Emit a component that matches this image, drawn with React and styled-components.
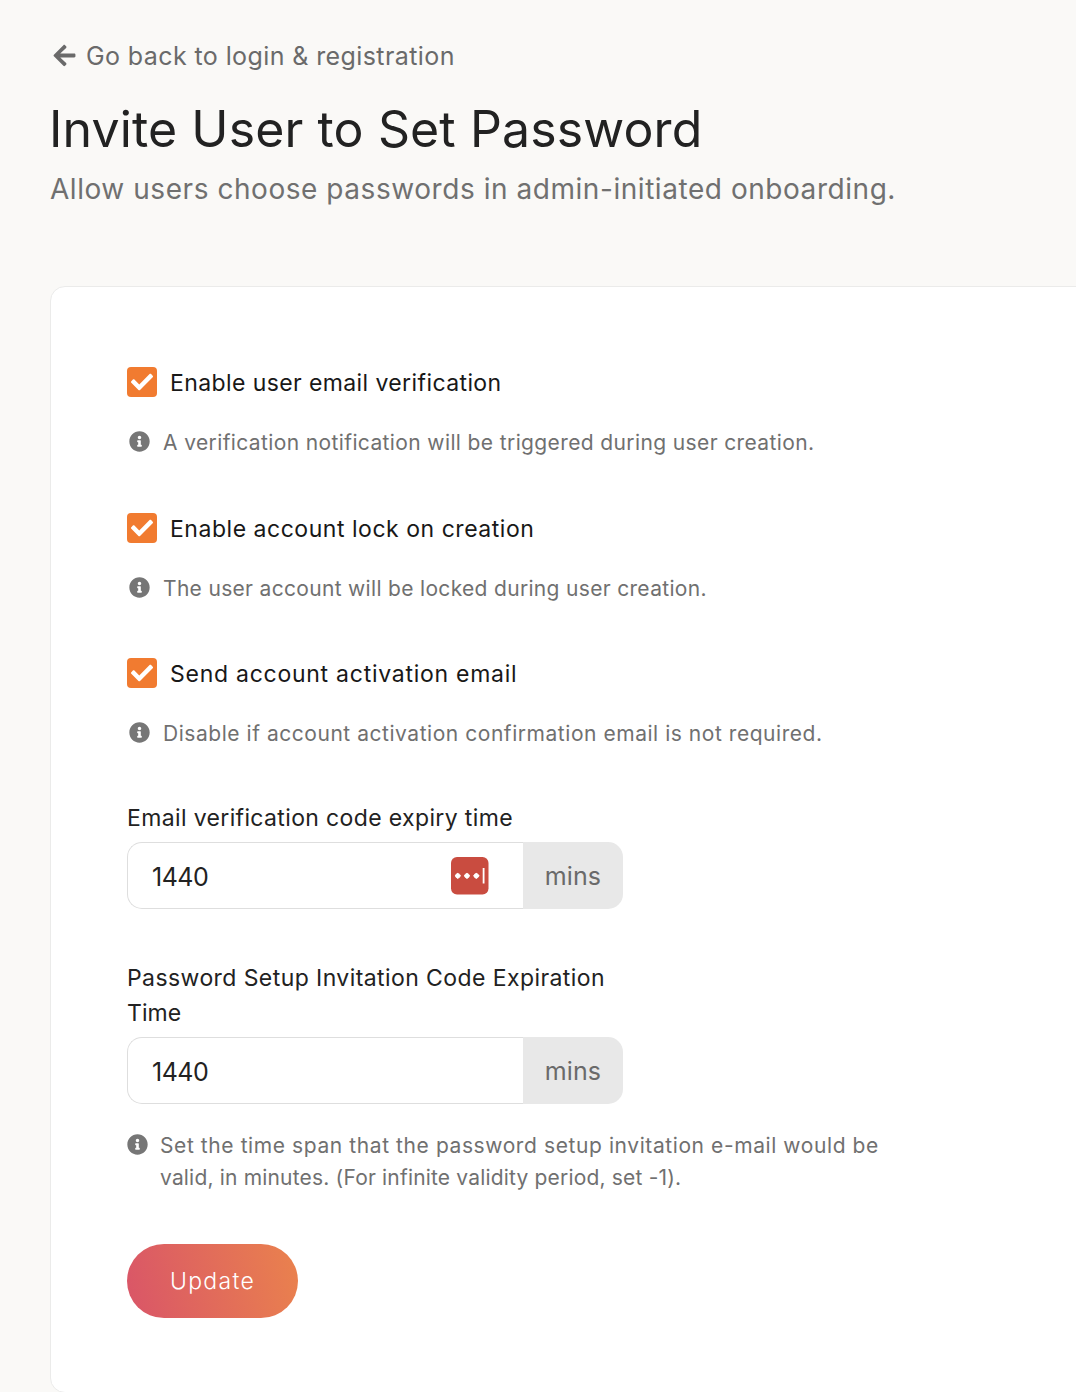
import React from "react";
import styled, { createGlobalStyle } from "styled-components";
import { FaArrowLeft, FaCheck, FaInfoCircle } from "react-icons/fa";

const GlobalStyle = createGlobalStyle`
  *, *::before, *::after { box-sizing: border-box; }
  body { margin: 0; background: #faf9f7; overflow: hidden; }
  button, input { font: inherit; letter-spacing: inherit; }
`;

const Page = styled.main`
  height: 1392px;
  overflow: hidden;
  padding: 38px 0 0 50px;
  background: #faf9f7;
  color: #222;
  font-family: Inter, "Liberation Sans", sans-serif;
  font-weight: 400;
`;

const Text = styled.span`
  display: block;
  white-space: nowrap;
  letter-spacing: ${(p) => p.$track || 0}px;
`;

const BackLink = styled.a`
  display: flex;
  align-items: center;
  gap: 9px;
  height: 36px;
  padding-left: 2px;
  color: #6a6a6a;
  font-size: 25px;
  line-height: 36px;
  svg { margin-top: -1px; }
`;

const Title = styled.h1`
  margin: 25px 0 0 -1px;
  font-size: 50px;
  line-height: 60px;
  font-weight: 400;
`;

const Subtitle = styled.p`
  margin: 13px 0 0;
  color: #707070;
  font-size: 28px;
  line-height: 34px;
`;

const Card = styled.section`
  width: 1100px;
  height: 1107px;
  margin-top: 80px;
  padding: 80px 76px 0;
  border: 1px solid #ebebea;
  border-radius: 15px;
  background: #fff;
`;

const Option = styled.div`
  height: 145.5px;
`;

const OptionLabel = styled.label`
  display: flex;
  align-items: center;
  gap: 13px;
  height: 30px;
  font-size: 23px;
  line-height: 32px;
  color: #181818;
  ${Text} { padding-top: 2px; }
`;

const Checkbox = styled.span`
  display: grid;
  place-items: center;
  width: 30px;
  height: 30px;
  border-radius: 4px;
  background: #f17b30;
  color: #fff;
  font-size: 22px;
`;

const Hint = styled.div`
  display: flex;
  align-items: flex-start;
  gap: ${(p) => (p.$flush ? 12 : 13)}px;
  margin-top: ${(p) => (p.$flush ? 26 : 30)}px;
  padding-left: ${(p) => (p.$flush ? 0 : 2)}px;
  color: #707070;
  font-size: 21px;
  line-height: 32px;
  svg { flex: none; width: 21px; height: 21px; margin-top: 4px; color: #767676; }
`;

const FieldLabel = styled.label`
  display: block;
  margin-top: ${(p) => p.$top}px;
  padding-bottom: 6px;
  color: #222;
  font-size: 23px;
  line-height: 35px;
`;

const Field = styled.div`
  display: flex;
  width: 496px;
  height: 67px;
`;

const InputShell = styled.div`
  display: flex;
  align-items: center;
  justify-content: space-between;
  width: 396px;
  padding: 0 34px 0 24px;
  border: 1px solid #dedede;
  border-right: 0;
  border-radius: 15px 0 0 15px;
`;

const NumberInput = styled.input`
  width: 120px;
  padding: 2px 0 0;
  border: 0;
  outline: 0;
  background: transparent;
  color: #222;
  font-size: 25px;
  letter-spacing: -0.5px;
`;

const Unit = styled.span`
  display: grid;
  place-items: center;
  width: 100px;
  border-radius: 0 15px 15px 0;
  background: #e8e8e8;
  color: #6a6a6a;
  font-size: 25px;
`;

const UpdateButton = styled.button`
  display: grid;
  place-items: center;
  width: 171px;
  height: 74px;
  margin-top: 50px;
  padding: 0;
  border: 0;
  border-radius: 37px;
  background: linear-gradient(77deg, #d95568 0%, #ea824d 100%);
  color: #fff;
  font-size: 23px;
  font-weight: 300;
`;

const PasswordIcon = () => (
  <svg width="38" height="38" viewBox="0 0 38 38">
    <rect width="37.5" height="37.5" rx="6" fill="#c94c40" />
    <g fill="#fff">
      <path d="M6.8 15.7l1.2 1.5 2 1.6-2 1.7-1.2 1.5-1.7-1.5-1.3-1.7 1.3-1.6z" />
      <path d="M16 15.7l1.5 1.5 1.6 1.6-1.6 1.7L16 22l-1.6-1.5-1.6-1.7 1.6-1.6z" />
      <path d="M25.3 15.7l1.6 1.5 1.8 1.6-1.8 1.7-1.6 1.5-1.6-1.5-1.6-1.7 1.6-1.6z" />
      <rect x="31.7" y="11" width="1.8" height="15.5" />
    </g>
    <g fill="none" stroke="#fff" strokeWidth="0.8">
      <circle cx="6.9" cy="18.8" r="2.2" />
      <circle cx="16" cy="18.8" r="2.2" />
      <circle cx="25.3" cy="18.8" r="2.2" />
    </g>
  </svg>
);

const options = [
  {
    label: "Enable user email verification",
    hint: "A verification notification will be triggered during user creation.",
    labelTrack: 0.4,
    hintTrack: 0.38,
  },
  {
    label: "Enable account lock on creation",
    hint: "The user account will be locked during user creation.",
    labelTrack: 0.53,
    hintTrack: 0.32,
  },
  {
    label: "Send account activation email",
    hint: "Disable if account activation confirmation email is not required.",
    labelTrack: 0.74,
    hintTrack: 0.54,
  },
];

const MinutesField = ({ withIcon }) => (
  <Field>
    <InputShell>
      <NumberInput defaultValue="1440" />
      {withIcon && <PasswordIcon />}
    </InputShell>
    <Unit><Text $track={0.1}>mins</Text></Unit>
  </Field>
);

export default function App() {
  return (
    <Page>
      <GlobalStyle />
      <BackLink>
        <FaArrowLeft size={25} />
        <Text $track={0.4}>Go back to login &amp; registration</Text>
      </BackLink>
      <Title><Text $track={0.12}>Invite User to Set Password</Text></Title>
      <Subtitle>
        <Text $track={0.55}>Allow users choose passwords in admin-initiated onboarding.</Text>
      </Subtitle>
      <Card>
        {options.map((o) => (
          <Option key={o.label}>
            <OptionLabel>
              <Checkbox><FaCheck /></Checkbox>
              <Text $track={o.labelTrack}>{o.label}</Text>
            </OptionLabel>
            <Hint>
              <FaInfoCircle />
              <Text $track={o.hintTrack}>{o.hint}</Text>
            </Hint>
          </Option>
        ))}
        <FieldLabel $top={-2.5}>
          <Text $track={0.36}>Email verification code expiry time</Text>
        </FieldLabel>
        <MinutesField withIcon />
        <FieldLabel $top={52}>
          <Text $track={0.42}>Password Setup Invitation Code Expiration</Text>
          <Text $track={0.1}>Time</Text>
        </FieldLabel>
        <MinutesField />
        <Hint $flush>
          <FaInfoCircle />
          <div>
            <Text $track={0.59}>Set the time span that the password setup invitation e-mail would be</Text>
            <Text $track={0.18}>valid, in minutes. (For infinite validity period, set -1).</Text>
          </div>
        </Hint>
        <UpdateButton><Text $track={1.3}>Update</Text></UpdateButton>
      </Card>
    </Page>
  );
}
